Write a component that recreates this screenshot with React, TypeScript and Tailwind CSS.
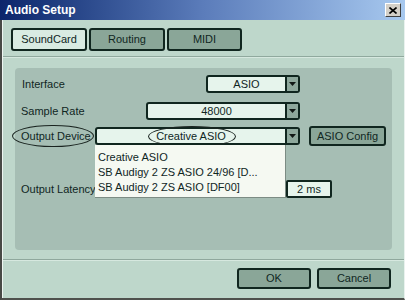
import type { ReactNode } from "react";

function Arrow() {
  return (
    <svg width="7" height="4" viewBox="0 0 7 4">
      <path d="M0 0h7L3.5 4z" fill="#111815" />
    </svg>
  );
}

function Dropdown({ className, children }: { className?: string; children: ReactNode }) {
  return (
    <div
      className={`relative flex h-[18px] shrink-0 rounded-[3px] border-2 border-[#10261f] bg-[#e6f4ec] ${className ?? ""}`}
    >
      <div className="flex flex-1 items-center justify-center text-[11px] leading-none text-[#10261f]">
        {children}
      </div>
      <div className="flex w-[13px] items-center justify-center border-l-2 border-[#10261f] bg-[#8ea89c]">
        <Arrow />
      </div>
    </div>
  );
}

function Button({ className, children }: { className?: string; children: ReactNode }) {
  return (
    <div
      className={`flex shrink-0 items-center justify-center rounded-[3px] border-2 border-[#10261f] bg-[#8aa698] text-[11px] leading-none text-[#10261f] ${className ?? ""}`}
    >
      {children}
    </div>
  );
}

const devices = ["Creative ASIO", "SB Audigy 2 ZS ASIO 24/96 [D...", "SB Audigy 2 ZS ASIO [DF00]"];

export default function App() {
  return (
    <div className="flex h-[300px] w-[405px] flex-col bg-[#bed7cb] font-['Liberation_Sans',Arial,sans-serif] text-[#10261f]">
      {/* title bar */}
      <div className="flex h-[20px] shrink-0 items-center justify-between bg-gradient-to-r from-[#0c256b] via-[#5b7cba] to-[#a8c9ef] pl-[5px] pr-[4px]">
        <span className="text-[12px] font-bold text-white">Audio Setup</span>
        <div className="flex h-[14px] w-[16px] items-center justify-center border border-t-white border-l-white border-r-[#404040] border-b-[#404040] bg-[#d4d0c8]">
          <svg width="8" height="7" viewBox="0 0 8 7">
            <path d="M0.5 0.5l7 6M7.5 0.5l-7 6" stroke="#000" strokeWidth="1.6" />
          </svg>
        </div>
      </div>

      <div className="flex flex-1 flex-col border-l-2 border-b-2 border-r border-l-[#484a46] border-b-[#4f514d] border-r-[#e9f2ee]">
        <div className="flex flex-1 flex-col border-l border-[#eef5f1]">
          {/* tabs */}
          <div className="flex gap-[2px] pl-[8px] pt-[8px]">
            <Button className="h-[23px] w-[76px] bg-[#d9ebe2]">SoundCard</Button>
            <Button className="h-[23px] w-[76px]">Routing</Button>
            <Button className="h-[23px] w-[75px]">MIDI</Button>
          </div>
          <div className="mt-[5px] h-px bg-[#90a99e]" />
          <div className="h-px bg-[#d6e8df]" />

          {/* panel */}
          <div className="mx-[12px] mt-[10px] flex h-[182px] flex-col rounded-[4px] bg-[#a6beb4] px-[6px] pt-[7px] text-[11px]">
            <div className="flex h-[18px] items-center">
              <span className="pl-px">Interface</span>
              <Dropdown className="ml-auto w-[94px]">ASIO</Dropdown>
              <div className="w-[86px] shrink-0" />
            </div>

            <div className="mt-[9px] flex h-[18px] items-center">
              <span>Sample Rate</span>
              <Dropdown className="ml-auto w-[154px]">48000</Dropdown>
              <div className="w-[86px] shrink-0" />
            </div>

            <div className="relative z-10 mt-[6px] flex h-[20px] items-center">
              <span className="relative">
                Output Device
                <span className="absolute -left-[9px] -right-[3px] -top-[3px] -bottom-[3px] rounded-[50%] border-[1.5px] border-[#1a2420]" />
              </span>
              <Dropdown className="ml-auto w-[205px]">
                <span className="relative">
                  Creative ASIO
                  <span className="absolute -left-[8px] -right-[10px] -top-[5px] -bottom-[5px] rounded-[50%] border-[1.5px] border-[#1a2420]" />
                </span>
                <div className="absolute left-[-2px] top-[16px] flex h-[53px] w-[191px] flex-col border-r border-b border-[#7c8c84] bg-[#f5f9f2] pl-[3px] pt-[5px]">
                  {devices.map((d) => (
                    <div key={d} className="flex h-[15px] items-center text-[11px] text-[#10261f]">
                      {d}
                    </div>
                  ))}
                </div>
              </Dropdown>
              <Button className="ml-[9px] h-[20px] w-[77px]">ASIO Config</Button>
            </div>

            <div className="mt-[34px] flex h-[18px] items-center">
              <span>Output Latency</span>
              <div className="ml-auto mr-[54px] flex h-[18px] w-[46px] items-center justify-center rounded-[2px] border-2 border-[#10261f] bg-[#e6f4ec]">
                2 ms
              </div>
            </div>
          </div>

          {/* footer */}
          <div className="mt-[9px] h-px bg-[#8fa89d]" />
          <div className="h-px bg-[#d6e8df]" />
          <div className="flex justify-end gap-[6px] pr-[13px] pt-[7px]">
            <Button className="h-[21px] w-[74px]">OK</Button>
            <Button className="h-[21px] w-[74px]">Cancel</Button>
          </div>
        </div>
      </div>
    </div>
  );
}
